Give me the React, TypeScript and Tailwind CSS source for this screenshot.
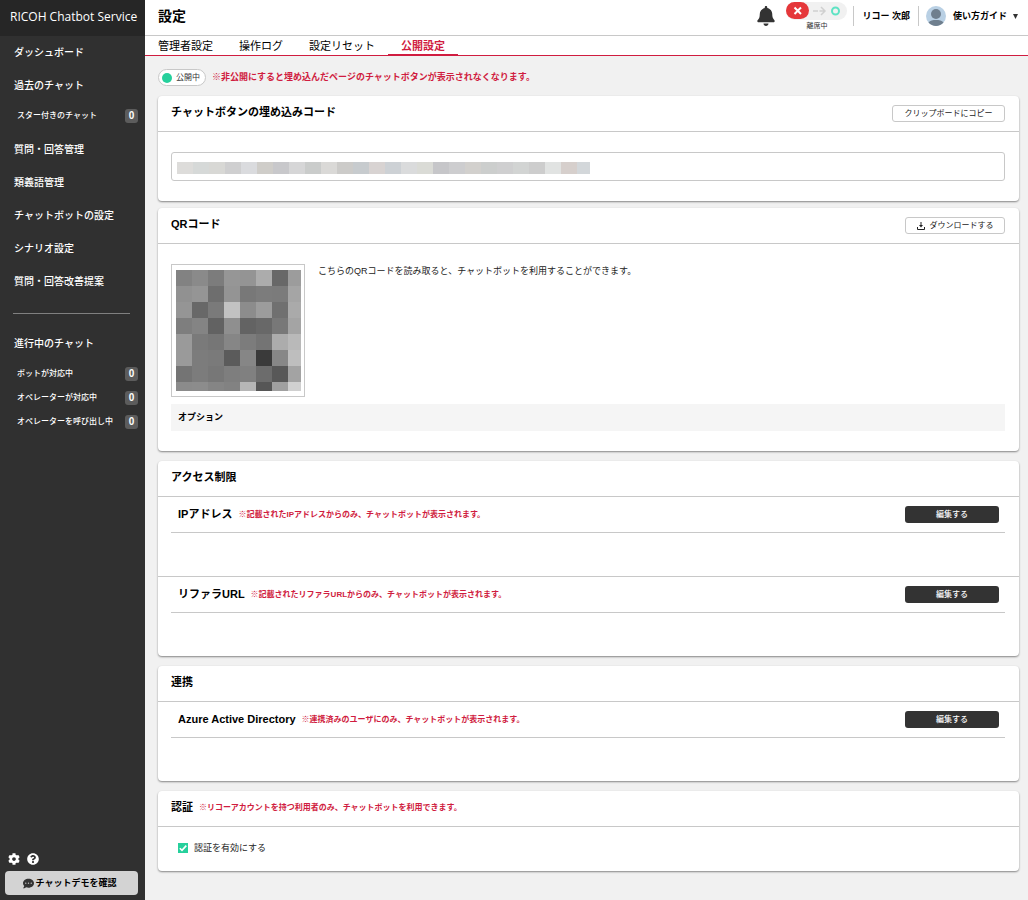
import { useState } from "react";
import type { ReactNode } from "react";
import { FaBell, FaCog, FaCommentDots, FaQuestionCircle } from "react-icons/fa";

const mainMenuTop = ["ダッシュボード", "過去のチャット"];

const mainMenuBottom = [
  "質問・回答管理",
  "類義語管理",
  "チャットボットの設定",
  "シナリオ設定",
  "質問・回答改善提案",
];

const activeChats = [
  { label: "ボットが対応中", count: 0 },
  { label: "オペレーターが対応中", count: 0 },
  { label: "オペレーターを呼び出し中", count: 0 },
];

const tabs = ["管理者設定", "操作ログ", "設定リセット", "公開設定"];

// Masked embed code, one colour per block
const codeBlocks = [
  "#dddcda", "#d6d9d8", "#d8d8d5", "#cfcfd0", "#dadbde", "#cfcdc9", "#c8c8cb",
  "#d6d6d7", "#cacccb", "#dad9d7", "#cccbc9", "#c7cbce", "#d8d3d2", "#cdd1d5",
  "#dadbdc", "#dadbd6", "#c6c6c9", "#cdcdcf", "#d2d0cd", "#cccecd", "#cfcfd0",
  "#d2d4d3", "#cdcdcd", "#e1e3e2", "#d6cfcc", "#d3d7da",
];

// Masked QR code, grey level of each block
const qrBlocks = [
  [130, 138, 124, 150, 148, 172, 104, 156],
  [145, 149, 110, 148, 120, 124, 123, 165],
  [149, 104, 122, 194, 140, 156, 112, 170],
  [126, 132, 98, 143, 99, 104, 120, 164],
  [154, 122, 118, 134, 124, 116, 172, 185],
  [154, 124, 122, 91, 134, 58, 135, 190],
  [116, 124, 119, 126, 128, 108, 88, 163],
  [139, 140, 133, 130, 182, 86, 160, 208],
];

function MenuLink({ children }: { children: ReactNode }) {
  return (
    <a href="#" className="flex h-[33px] items-center px-[14px] text-[10px] font-medium hover:bg-white/10">
      {children}
    </a>
  );
}

function SubMenuLink({ label, count }: { label: string; count: number }) {
  return (
    <a href="#" className="flex h-6 items-center justify-between pl-[17px] pr-[7px] text-[8px] font-medium hover:bg-white/10">
      <span className="whitespace-nowrap">{label}</span>
      <span className="flex h-[14px] w-[13px] items-center justify-center rounded-[3px] bg-[#5c5c5c] text-[10px] font-bold">
        {count}
      </span>
    </a>
  );
}

function Card({ title, note, action, children }: {
  title: string;
  note?: string;
  action?: ReactNode;
  children?: ReactNode;
}) {
  return (
    <section className="rounded bg-white shadow-[0_1px_2px_rgba(0,0,0,0.45)]">
      <div className="flex h-9 items-center justify-between border-b border-[#c8c8c8] pl-[13px] pr-[14px]">
        <div className="flex items-center gap-[6px] pb-0.5">
          <h2 className="text-[11px] font-bold">{title}</h2>
          {note && <Note>{note}</Note>}
        </div>
        {action}
      </div>
      {children}
    </section>
  );
}

function Note({ children }: { children: ReactNode }) {
  return <p className="text-[8px] font-bold text-[#d01c40]">{children}</p>;
}

function EditRow({ title, note }: { title: string; note: string }) {
  return (
    <div className="pb-[43px] pl-[13px] pr-[14px]">
      <div className="flex h-9 items-center justify-between border-b border-[#c8c8c8] pl-[7px] pr-[6px]">
        <div className="flex items-center gap-[6px]">
          <h3 className="text-[11px] font-bold">{title}</h3>
          <Note>{note}</Note>
        </div>
        <button
          type="button"
          className="h-[17px] w-[94px] rounded-[3px] bg-[#333] text-[8px] font-medium text-white hover:bg-[#444]"
        >
          編集する
        </button>
      </div>
    </div>
  );
}

function Sidebar() {
  return (
    <aside className="flex w-[145px] shrink-0 flex-col bg-[#303030] text-white">
      <div className="flex h-9 items-center whitespace-nowrap bg-[#262626] pb-0.5 pl-[10px] font-['Open_Sans'] text-[12px]">
        RICOH Chatbot Service
      </div>

      <nav>
        {mainMenuTop.map((item) => (
          <MenuLink key={item}>{item}</MenuLink>
        ))}
        <div className="mb-[5px] mt-[2px]">
          <SubMenuLink label="スター付きのチャット" count={0} />
        </div>
        {mainMenuBottom.map((item) => (
          <MenuLink key={item}>{item}</MenuLink>
        ))}

        <hr className="mb-[13px] ml-[13px] mr-[15px] mt-[15px] border-[#808080]" />

        <MenuLink>進行中のチャット</MenuLink>
        <div className="mt-[2px]">
          {activeChats.map((chat) => (
            <SubMenuLink key={chat.label} label={chat.label} count={chat.count} />
          ))}
        </div>
      </nav>

      <div className="mt-auto p-[5px]">
        <div className="mb-[6px] flex gap-[7px] pl-[3px]">
          <button type="button" aria-label="設定">
            <FaCog className="h-3 w-3" />
          </button>
          <button type="button" aria-label="ヘルプ">
            <FaQuestionCircle className="h-3 w-3" />
          </button>
        </div>
        <button
          type="button"
          className="flex h-6 w-[133px] items-center justify-center gap-[2px] rounded bg-[#d3d3d3] pr-1 text-[9px] font-bold text-black"
        >
          <FaCommentDots className="h-[11px] w-[11px] text-[#333]" />
          チャットデモを確認
        </button>
      </div>
    </aside>
  );
}

function Header() {
  return (
    <header className="flex h-9 items-center border-b border-[#c8c8c8] bg-white pb-[3px] pl-[13px] pr-[10px]">
      <h1 className="text-[14px] font-bold">設定</h1>

      <div className="ml-auto flex items-center">
        <button type="button" aria-label="お知らせ">
          <FaBell className="h-5 w-[18px] text-[#333]" />
        </button>

        {/* Away / available switch */}
        <button type="button" className="ml-[11px] flex flex-col items-center gap-[1px]">
          <svg width="61" height="18" viewBox="0 0 61 18" fill="none">
            <rect width="61" height="18" rx="9" fill="#f1f1f1" />
            <rect width="23" height="17" rx="8.5" fill="#e5373a" />
            <path d="M8.500 5.500l6.500 6.500M15 5.500L8.500 12" stroke="white" strokeWidth="2" />
            <path d="M27 9h5M33.500 9h5M35 5l4 4-4 4" stroke="#d0d0d0" strokeWidth="1.500" />
            <circle cx="49.500" cy="9" r="3.500" stroke="#5fe3c4" strokeWidth="2" />
          </svg>
          <span className="text-[7px] leading-[9px] text-[#333]">離席中</span>
        </button>

        <span className="ml-[6px] h-5 w-px bg-[#c8c8c8]" />
        <span className="mx-2 whitespace-nowrap text-[9px] font-bold">リコー 次郎</span>
        <span className="h-5 w-px bg-[#c8c8c8]" />

        <svg className="ml-[7px]" width="20" height="20" viewBox="0 0 20 20">
          <circle cx="10" cy="10" r="10" fill="#b9d0e4" />
          <circle cx="10" cy="8" r="5" fill="#6f7f8e" />
          <path d="M2.500 16.600C4 14.600 6.800 14 10 14s6 .600 7.500 2.600A10 10 0 0 1 10 20a10 10 0 0 1-7.500-3.400z" fill="#6f7f8e" />
        </svg>
        <button type="button" className="ml-[7px] flex items-center gap-[6px] text-[9px] font-bold">
          使い方ガイド
          <svg width="5" height="5" viewBox="0 0 5 5">
            <path d="M0 0h5L2.500 5z" fill="#333" />
          </svg>
        </button>
      </div>
    </header>
  );
}

export default function App() {
  const [authEnabled, setAuthEnabled] = useState(true);

  return (
    <div className="flex min-h-screen bg-[#f1f1f1] font-['Liberation_Sans','Noto_Sans_CJK_JP',sans-serif] leading-none text-black">
      <Sidebar />

      <div className="min-w-0 flex-1">
        <Header />

        <nav className="flex h-5 border-b border-[#d01c40] bg-white">
          {tabs.map((tab) => (
            <a
              key={tab}
              href="#"
              className={
                tab === "公開設定"
                  ? "flex items-center border-b border-[#d01c40] px-[13px] pt-0.5 text-[11px] font-bold text-[#d01c40]"
                  : "flex items-center px-[13px] pt-0.5 text-[11px]"
              }
            >
              {tab}
            </a>
          ))}
        </nav>

        <main className="pb-5 pl-[13px] pr-[9px] pt-[13px]">
          <div className="mb-[10px] flex items-center gap-[6px]">
            <button
              type="button"
              className="flex h-[17px] w-12 items-center gap-1 rounded-full border border-[#c8c8c8] bg-white pl-[3px] text-[8px] text-[#333]"
            >
              <span className="h-[10px] w-[10px] shrink-0 rounded-full bg-[#26d09c]" />
              公開中
            </button>
            <p className="text-[9px] font-bold text-[#d01c40]">
              ※非公開にすると埋め込んだページのチャットボタンが表示されなくなります。
            </p>
          </div>

          <Card
            title="チャットボタンの埋め込みコード"
            action={
              <button type="button" className="h-[17px] w-[113px] rounded-[3px] border border-[#c8c8c8] text-[8px] text-[#222]">
                クリップボードにコピー
              </button>
            }
          >
            <div className="py-5 pl-[13px] pr-[14px]">
              <div className="relative">
                <input
                  type="text"
                  readOnly
                  aria-label="埋め込みコード"
                  className="block h-[29px] w-full rounded-[3px] border border-[#c8c8c8] px-[6px] text-[9px]"
                />
                <svg className="absolute left-[6px] top-[10px]" width="413" height="12" viewBox="0 0 413 12" shapeRendering="crispEdges">
                  {codeBlocks.map((color, i) => (
                    <rect key={i} x={i * 16} width="16" height="12" fill={color} />
                  ))}
                </svg>
              </div>
            </div>
          </Card>

          <div className="mt-[7px] space-y-[10px]">
            <Card
              title="QRコード"
              action={
                <button
                  type="button"
                  className="flex h-[17px] w-[100px] items-center justify-center gap-[5px] rounded-[3px] border border-[#c8c8c8] text-[8px] text-[#222]"
                >
                  <svg width="8" height="8" viewBox="0 0 8 8" fill="none" stroke="#222">
                    <path d="M4 0v4M.500 5v2.500h7V5" />
                    <path d="M2 3h4L4 5.500z" fill="#222" stroke="none" />
                  </svg>
                  ダウンロードする
                </button>
              }
            >
              <div className="py-5 pl-[13px] pr-[14px]">
                <div className="mb-[7px] flex items-start gap-[13px]">
                  <div className="border border-[#c8c8c8] pb-[5px] pl-1 pr-[3px] pt-[5px]">
                    <svg width="125" height="121" viewBox="0 0 125 121" shapeRendering="crispEdges" role="img" aria-label="QRコード">
                      {qrBlocks.map((row, y) =>
                        row.map((level, x) => (
                          <rect
                            key={`${x}-${y}`}
                            x={x * 16}
                            y={y * 16}
                            width="16"
                            height="16"
                            fill={`rgb(${level},${level},${level})`}
                          />
                        ))
                      )}
                    </svg>
                  </div>
                  <p className="text-[9px] leading-[14px] text-[#222]">
                    こちらのQRコードを読み取ると、チャットボットを利用することができます。
                  </p>
                </div>
                <h3 className="flex h-[27px] items-center bg-[#f5f5f5] pl-[7px] text-[9px] font-bold">オプション</h3>
              </div>
            </Card>

            <Card title="アクセス制限">
              <div className="divide-y divide-[#c8c8c8]">
                <EditRow
                  title="IPアドレス"
                  note="※記載されたIPアドレスからのみ、チャットボットが表示されます。"
                />
                <EditRow
                  title="リファラURL"
                  note="※記載されたリファラURLからのみ、チャットボットが表示されます。"
                />
              </div>
            </Card>

            <Card title="連携">
              <EditRow
                title="Azure Active Directory"
                note="※連携済みのユーザにのみ、チャットボットが表示されます。"
              />
            </Card>

            <Card title="認証" note="※リコーアカウントを持つ利用者のみ、チャットボットを利用できます。">
              <div className="flex h-11 items-center pb-0.5 pl-5">
                <label className="flex items-center gap-[6px] text-[9px] text-[#222]">
                  <span className="relative h-[10px] w-[10px]">
                    <input
                      type="checkbox"
                      checked={authEnabled}
                      onChange={(e) => setAuthEnabled(e.target.checked)}
                      className="peer block h-[10px] w-[10px] appearance-none border border-[#26d09c] bg-white checked:bg-[#26d09c]"
                    />
                    <svg
                      className="pointer-events-none absolute inset-0 hidden peer-checked:block"
                      width="10"
                      height="10"
                      viewBox="0 0 10 10"
                      fill="none"
                    >
                      <path d="M1.800 5.200l2.200 2.200 4.300-4.800" stroke="white" strokeWidth="1.600" />
                    </svg>
                  </span>
                  認証を有効にする
                </label>
              </div>
            </Card>
          </div>
        </main>
      </div>
    </div>
  );
}
